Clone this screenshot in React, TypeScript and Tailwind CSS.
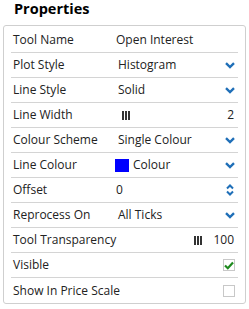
import React from "react";

const Chevron = () => (
  <svg width="10" height="7" viewBox="0 0 10 7" className="shrink-0">
    <path d="M1 1.2 L5 5 L9 1.2" fill="none" stroke="#1f6fb8" strokeWidth="2.4" strokeLinecap="butt" />
  </svg>
);

const Spinner = () => (
  <svg width="8" height="12" viewBox="0 0 8 12" className="shrink-0">
    <path d="M1 4.5 L4 1.5 L7 4.5" fill="none" stroke="#1f6fb8" strokeWidth="2" />
    <path d="M1 7.5 L4 10.5 L7 7.5" fill="none" stroke="#1f6fb8" strokeWidth="2" />
  </svg>
);

const Grip = () => (
  <span className="flex gap-[1px] items-center h-[9px]">
    <span className="w-[2px] h-[9px] bg-[#333]" />
    <span className="w-[2px] h-[9px] bg-[#333]" />
    <span className="w-[2px] h-[9px] bg-[#333]" />
  </span>
);

const Check = ({ checked }: { checked: boolean }) => (
  <span className="w-[12px] h-[12px] border border-[#c8c8c8] bg-white flex items-center justify-center">
    {checked && (
      <svg width="10" height="9" viewBox="0 0 10 9">
        <path d="M1 4.5 L3.8 7.2 L9 1.5" fill="none" stroke="#1e8a1e" strokeWidth="2.2" />
      </svg>
    )}
  </span>
);

const Row = ({ label, children, last }: { label: string; children?: React.ReactNode; last?: boolean }) => (
  <div className={`flex items-center h-[25px] pl-[2px] pr-[3px] ${last ? "" : "border-b border-[#d4d4d4]"}`}>
    <div className="w-[103px] shrink-0 whitespace-nowrap">{label}</div>
    <div className="flex-1 flex items-center min-w-0">{children}</div>
  </div>
);

export default function App() {
  return (
    <div className="w-[249px] h-[309px] bg-white text-[#222] text-[12px]" style={{ fontFamily: '"Open Sans", sans-serif' }}>
      <div className="h-[25px] pl-[14px] pt-0 font-bold text-[14.5px] leading-[18px] text-black">Properties</div>
      <div className="mx-[3px] w-[243px] border border-[#cfcfcf] rounded-[3px] px-[7px] pt-[2px] pb-0">
        <Row label="Tool Name">
          <span>Open Interest</span>
        </Row>
        <Row label="Plot Style">
          <span className="pl-[2px] flex-1">Histogram</span>
          <Chevron />
        </Row>
        <Row label="Line Style">
          <span className="pl-[2px] flex-1">Solid</span>
          <Chevron />
        </Row>
        <Row label="Line Width">
          <span className="pl-[6px] flex-1"><Grip /></span>
          <span className="pr-[1px]">2</span>
        </Row>
        <Row label="Colour Scheme">
          <span className="pl-[2px] flex-1">Single Colour</span>
          <Chevron />
        </Row>
        <Row label="Line Colour">
          <span className="ml-[-1px] w-[14px] h-[13px] bg-[#0000ff] mr-[4px]" />
          <span className="flex-1">Colour</span>
          <Chevron />
        </Row>
        <Row label="Offset">
          <span className="flex-1">0</span>
          <span className="pr-[1px]"><Spinner /></span>
        </Row>
        <Row label="Reprocess On">
          <span className="pl-[2px] flex-1">All Ticks</span>
          <Chevron />
        </Row>
        <Row label="Tool Transparency">
          <span className="flex-1" />
          <span className="mr-[11px]"><Grip /></span>
          <span className="pr-[1px]">100</span>
        </Row>
        <Row label="Visible">
          <span className="flex-1" />
          <Check checked />
        </Row>
        <Row label="Show In Price Scale" last>
          <span className="flex-1" />
          <Check checked={false} />
        </Row>
      </div>
    </div>
  );
}
